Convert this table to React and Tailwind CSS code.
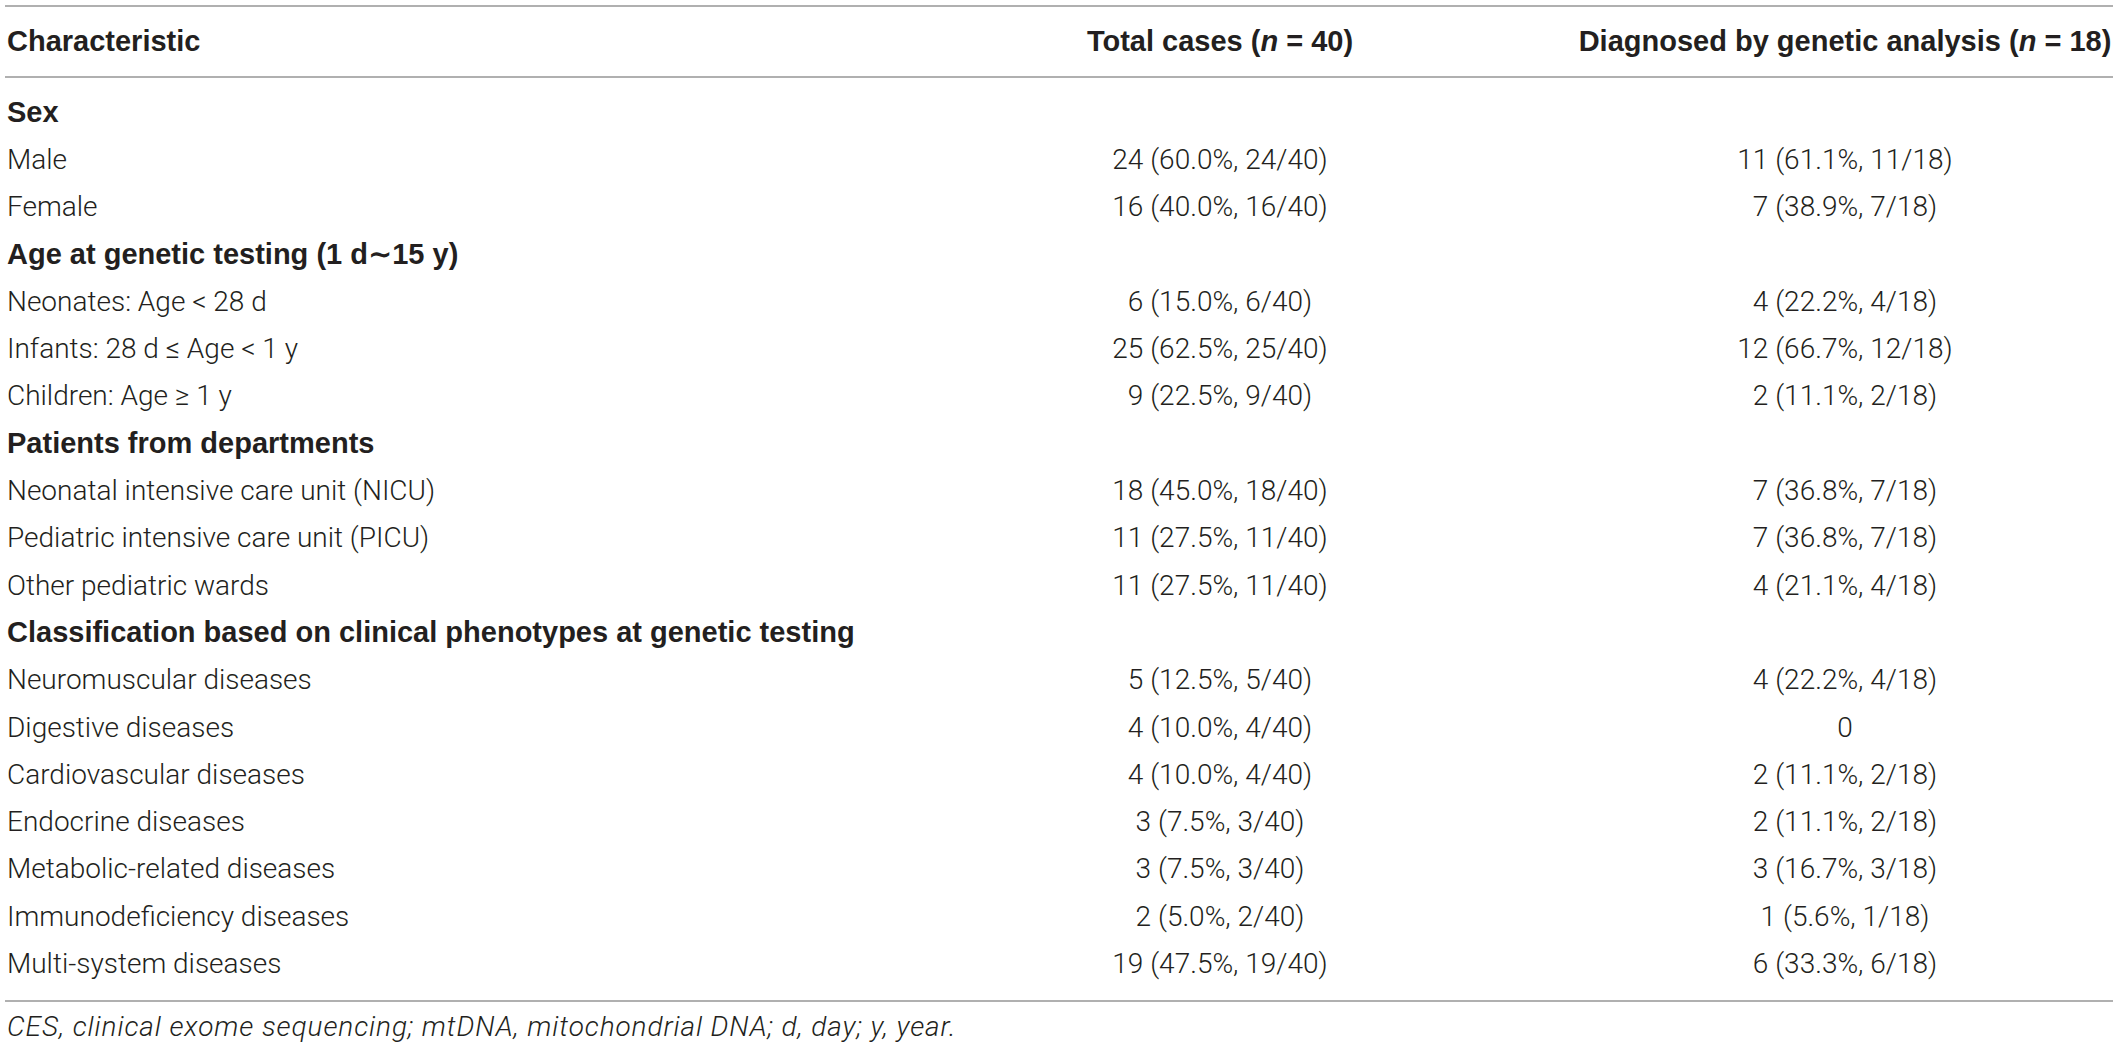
import React from 'react'

const SECTIONS = [
  {
    title: 'Sex',
    rows: [
      ['Male', '24 (60.0%, 24/40)', '11 (61.1%, 11/18)'],
      ['Female', '16 (40.0%, 16/40)', '7 (38.9%, 7/18)'],
    ],
  },
  {
    title: 'Age at genetic testing (1 d\u223C15 y)',
    rows: [
      ['Neonates: Age < 28 d', '6 (15.0%, 6/40)', '4 (22.2%, 4/18)'],
      ['Infants: 28 d \u2264 Age < 1 y', '25 (62.5%, 25/40)', '12 (66.7%, 12/18)'],
      ['Children: Age \u2265 1 y', '9 (22.5%, 9/40)', '2 (11.1%, 2/18)'],
    ],
  },
  {
    title: 'Patients from departments',
    rows: [
      ['Neonatal intensive care unit (NICU)', '18 (45.0%, 18/40)', '7 (36.8%, 7/18)'],
      ['Pediatric intensive care unit (PICU)', '11 (27.5%, 11/40)', '7 (36.8%, 7/18)'],
      ['Other pediatric wards', '11 (27.5%, 11/40)', '4 (21.1%, 4/18)'],
    ],
  },
  {
    title: 'Classification based on clinical phenotypes at genetic testing',
    rows: [
      ['Neuromuscular diseases', '5 (12.5%, 5/40)', '4 (22.2%, 4/18)'],
      ['Digestive diseases', '4 (10.0%, 4/40)', '0'],
      ['Cardiovascular diseases', '4 (10.0%, 4/40)', '2 (11.1%, 2/18)'],
      ['Endocrine diseases', '3 (7.5%, 3/40)', '2 (11.1%, 2/18)'],
      ['Metabolic-related diseases', '3 (7.5%, 3/40)', '3 (16.7%, 3/18)'],
      ['Immunodeficiency diseases', '2 (5.0%, 2/40)', '1 (5.6%, 1/18)'],
      ['Multi-system diseases', '19 (47.5%, 19/40)', '6 (33.3%, 6/18)'],
    ],
  },
]

function Rule() {
  return <div className="h-[2px] bg-[#b0b0b0]" />
}

export default function App() {
  return (
    <div className="w-[2118px] h-[1048px] bg-white px-[5px] pt-[5px] text-[#231f20] overflow-hidden">
      <Rule />
      {/* header */}
      <div className="flex items-center h-[69px] text-[29px] font-bold whitespace-nowrap font-['Liberation_Sans',Arial,sans-serif]">
        <div className="flex-1 pl-[2px]">Characteristic</div>
        <div className="w-[440px] text-center">
          Total cases (<i>n</i> = 40)
        </div>
        <div className="w-[536px] ml-[137px] text-center">
          Diagnosed by genetic analysis (<i>n</i> = 18)
        </div>
      </div>
      <Rule />
      <div className="pt-[11px] pb-[12px]">
        {SECTIONS.map((s) => (
          <React.Fragment key={s.title}>
            <div className="h-[47.3px] flex items-center pl-[2px] text-[29px] font-bold whitespace-nowrap font-['Liberation_Sans','DejaVu_Sans',sans-serif]">
              {s.title}
            </div>
            {s.rows.map(([label, total, diag]) => (
              <div key={label} className="h-[47.3px] flex items-center text-[28px] font-light whitespace-nowrap font-['Roboto','Liberation_Sans',sans-serif]">
                <div className="flex-1 pl-[2px]">{label}</div>
                <div className="w-[440px] text-center">{total}</div>
                <div className="w-[536px] ml-[137px] text-center">{diag}</div>
              </div>
            ))}
          </React.Fragment>
        ))}
      </div>
      <Rule />
      <div className="mt-[9px] pl-[2px] text-[28px] font-light italic tracking-[0.9px] leading-[31px] whitespace-nowrap font-['Roboto','Liberation_Sans',sans-serif]">
        CES, clinical exome sequencing; mtDNA, mitochondrial DNA; d, day; y, year.
      </div>
    </div>
  )
}
